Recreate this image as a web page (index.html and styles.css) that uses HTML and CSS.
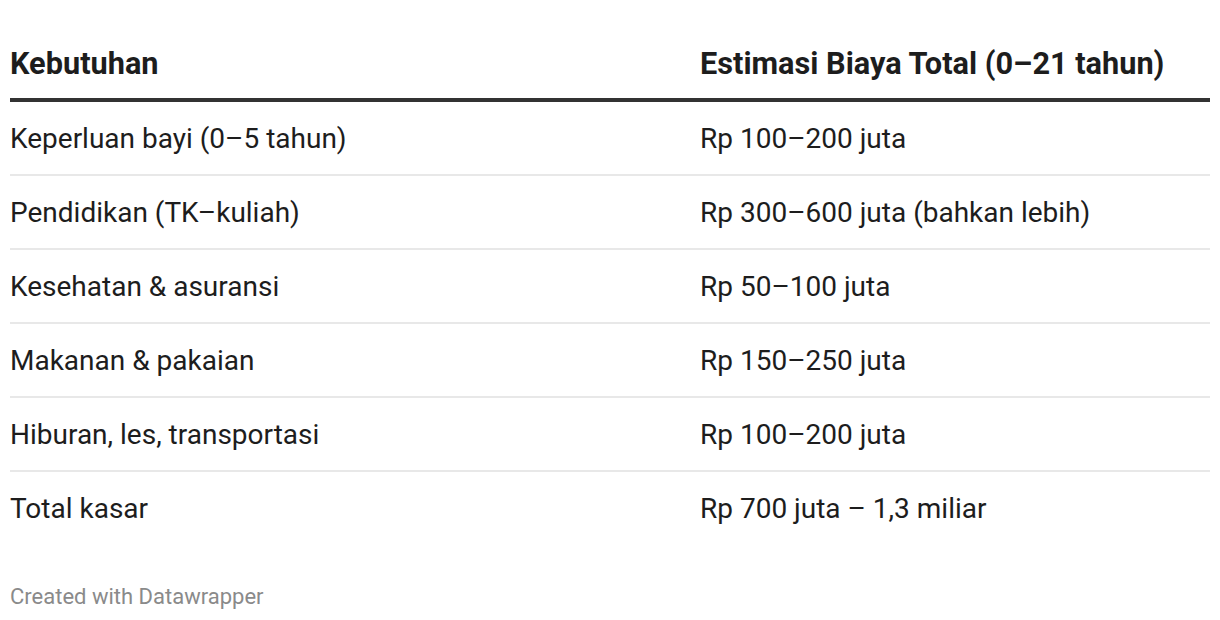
FILE: index.html
```html
<!DOCTYPE html>
<html lang="id">
<head>
<meta charset="utf-8">
<title>Biaya membesarkan anak</title>
<link rel="stylesheet" href="styles.css">
</head>
<body>
<div class="chart">
  <table class="tbl">
    <thead>
      <tr>
        <th class="c1">Kebutuhan</th>
        <th class="c2">Estimasi Biaya Total (0–21 tahun)</th>
      </tr>
    </thead>
    <tbody>
      <tr><td class="c1">Keperluan bayi (0–5 tahun)</td><td class="c2">Rp 100–200 juta</td></tr>
      <tr><td class="c1">Pendidikan (TK–kuliah)</td><td class="c2">Rp 300–600 juta (bahkan lebih)</td></tr>
      <tr><td class="c1">Kesehatan &amp; asuransi</td><td class="c2">Rp 50–100 juta</td></tr>
      <tr><td class="c1">Makanan &amp; pakaian</td><td class="c2">Rp 150–250 juta</td></tr>
      <tr><td class="c1">Hiburan, les, transportasi</td><td class="c2">Rp 100–200 juta</td></tr>
      <tr class="last"><td class="c1">Total kasar</td><td class="c2">Rp 700 juta – 1,3 miliar</td></tr>
    </tbody>
  </table>
  <div class="footer">Created with Datawrapper</div>
</div>
</body>
</html>
```

FILE: styles.css
```css
html, body {
  margin: 0;
  padding: 0;
  background: #ffffff;
}

.chart {
  padding: 0 10px;
  font-family: Roboto, "Liberation Sans", Arial, sans-serif;
  color: #1d1d1d;
}

.tbl {
  width: 100%;
  border-collapse: collapse;
  table-layout: fixed;
}

.tbl .c1 {
  width: 689px;
  padding-left: 0;
}

.tbl .c2 {
  padding-left: 0;
}

.tbl th {
  text-align: left;
  font-weight: 700;
  font-size: 30.7px;
  line-height: 36px;
  padding-top: 46px;
  padding-bottom: 16px;
  border-bottom: 4px solid #333333;
}

.tbl td {
  font-size: 28px;
  line-height: 30px;
  padding-top: 22px;
  padding-bottom: 20px;
  border-bottom: 2px solid #e8e8e8;
}

.tbl tr.last td {
  border-bottom: none;
}

.footer {
  margin-top: 40px;
  font-size: 22px;
  line-height: 26px;
  color: #8a8a8a;
}
```
